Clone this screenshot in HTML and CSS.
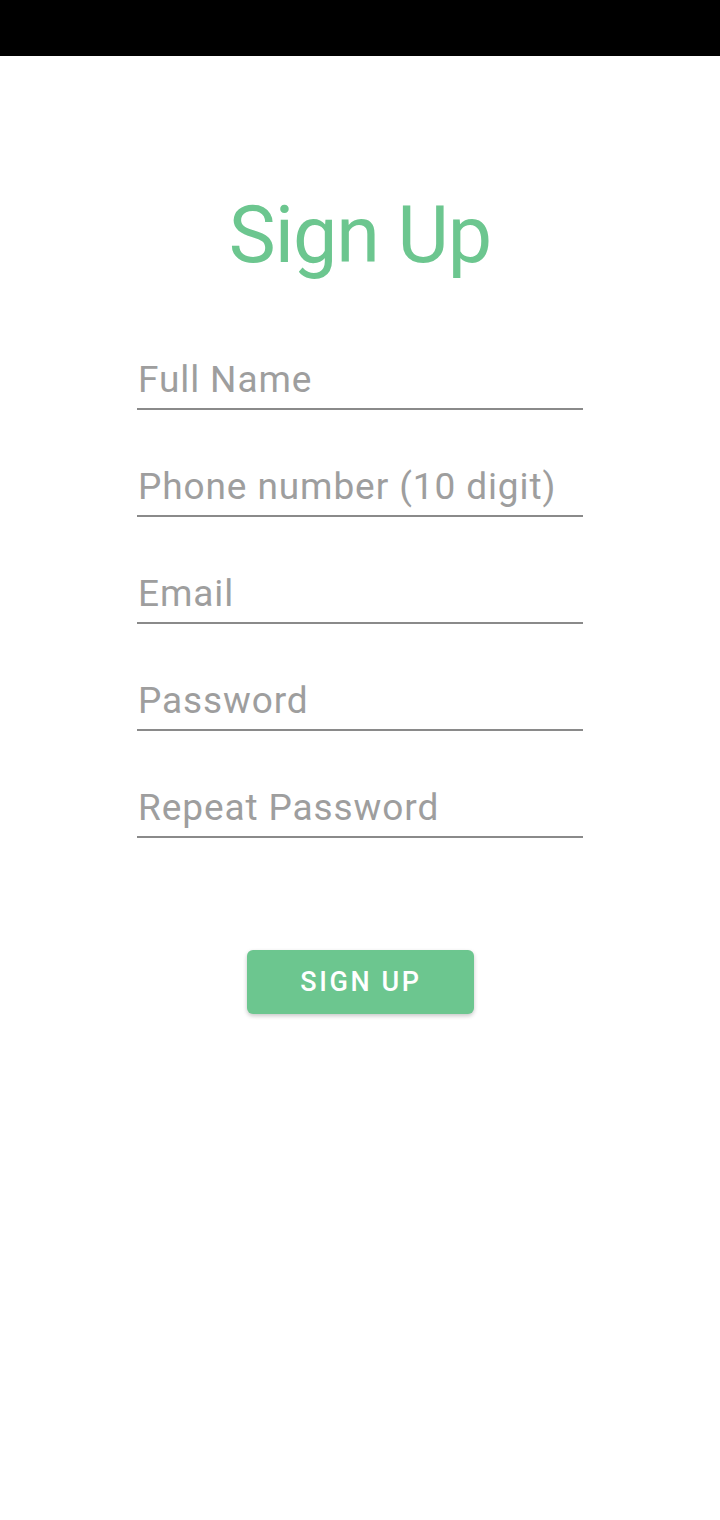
FILE: index.html
```html
<!DOCTYPE html>
<html lang="en">
<head>
<meta charset="utf-8">
<title>Sign Up</title>
<link rel="stylesheet" href="styles.css">
</head>
<body>
<div class="status-bar"></div>
<main class="page">
  <h1 class="title">Sign Up</h1>
  <form class="form">
    <input class="field" type="text" placeholder="Full Name">
    <input class="field" type="tel" placeholder="Phone number (10 digit)">
    <input class="field" type="email" placeholder="Email">
    <input class="field" type="password" placeholder="Password">
    <input class="field" type="password" placeholder="Repeat Password">
    <button class="btn" type="button">Sign Up</button>
  </form>
</main>
</body>
</html>
```

FILE: styles.css
```css
html, body {
  margin: 0;
  padding: 0;
  background: #ffffff;
}
body {
  width: 720px;
  height: 1520px;
  font-family: Roboto, "Noto Sans", "Liberation Sans", sans-serif;
}
.status-bar {
  height: 56px;
  background: #000000;
}
.page {
  display: flex;
  flex-direction: column;
  align-items: center;
}
.title {
  margin: 132px 0 0 0;
  font-size: 79px;
  line-height: 94px;
  font-weight: 400;
  letter-spacing: -1px;
  color: #6cc68f;
}
.form {
  margin-top: 77px;
  display: flex;
  flex-direction: column;
  align-items: center;
  gap: 56px;
}
.field {
  box-sizing: content-box;
  width: 445px;
  height: 42px;
  margin: 0;
  padding: 0 0 7px 1px;
  border: none;
  border-bottom: 2px solid #8a8a8a;
  outline: none;
  background: transparent;
  font-family: Roboto, "Noto Sans", "Liberation Sans", sans-serif;
  font-size: 37px;
  line-height: 42px;
  letter-spacing: 0.9px;
  color: #333333;
}
.field::placeholder {
  color: #9e9e9e;
  opacity: 1;
}
.btn {
  margin-top: 56px;
  width: 227px;
  height: 64px;
  border: none;
  border-radius: 6px;
  background: #6cc68f;
  color: #ffffff;
  font-family: Roboto, "Noto Sans", "Liberation Sans", sans-serif;
  font-size: 27px;
  font-weight: 500;
  letter-spacing: 2.6px;
  text-transform: uppercase;
  box-shadow: 0 2px 4px rgba(0, 0, 0, 0.22);
  padding: 0 0 0 2px;
}
```
